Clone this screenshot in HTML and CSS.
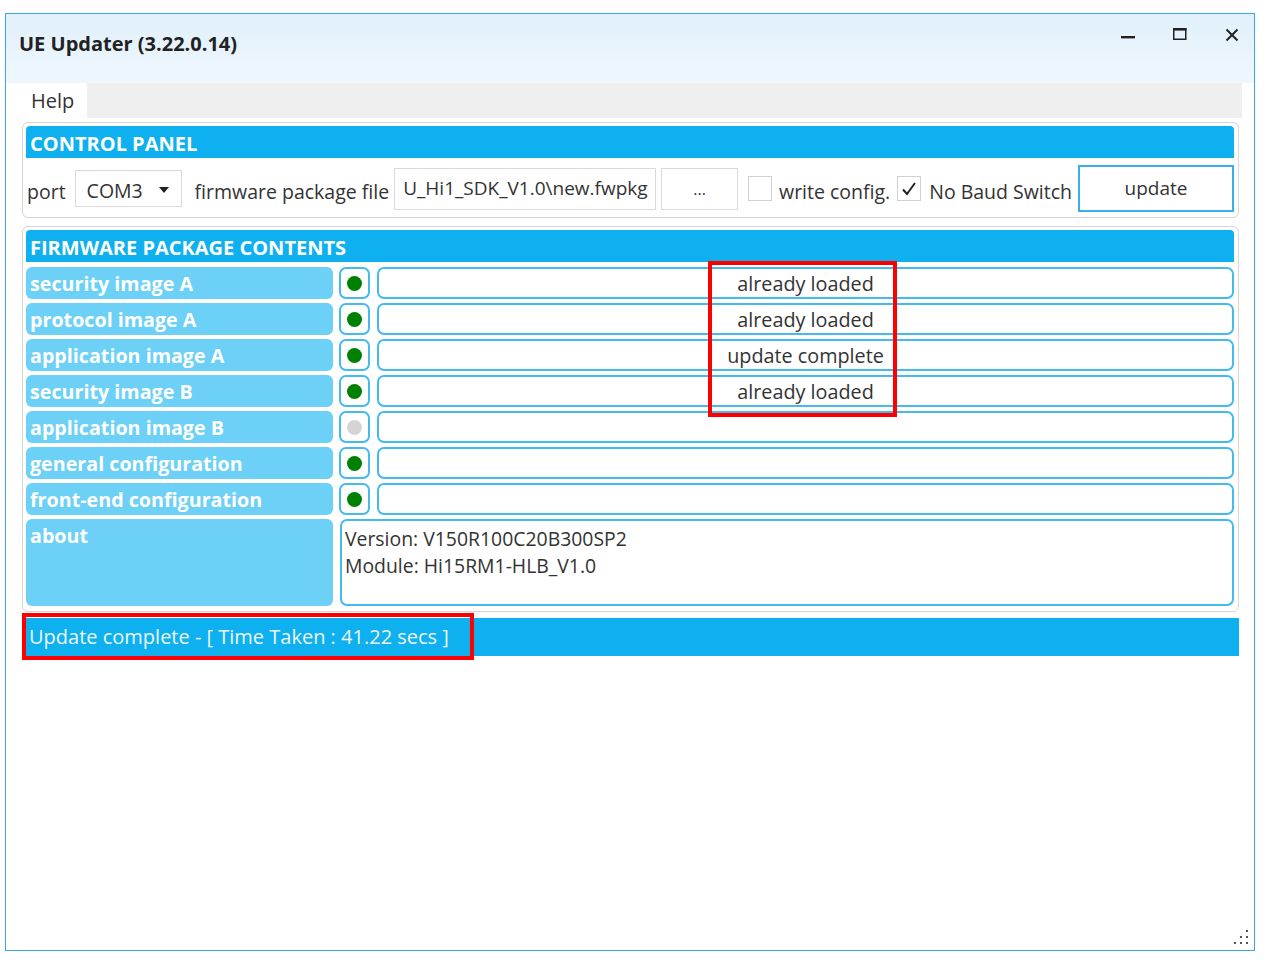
FILE: index.html
```html
<!DOCTYPE html>
<html>
<head>
<meta charset="utf-8">
<link rel="stylesheet" href="styles.css">
</head>
<body>
<div class="window">
  <div class="titlebar">
    <div class="title">UE Updater (3.22.0.14)</div>
    <div class="wctrls">
      <svg class="wc" width="16" height="16" viewBox="0 0 16 16"><rect x="1" y="9" width="14" height="2.4" fill="#222"/></svg>
      <svg class="wc" width="16" height="16" viewBox="0 0 16 16"><rect x="1.75" y="1.75" width="12" height="10.5" fill="none" stroke="#222" stroke-width="1.5"/><rect x="1" y="1" width="13.5" height="2.6" fill="#222"/></svg>
      <svg class="wc" width="16" height="16" viewBox="0 0 16 16"><path d="M2.5 2.5 L13.5 13.5 M13.5 2.5 L2.5 13.5" stroke="#222" stroke-width="2" fill="none"/></svg>
    </div>
  </div>
  <div class="menubar"><span class="menuitem">Help</span></div>

  <div class="content">
    <div class="panel cp">
      <div class="phead">CONTROL PANEL</div>
      <div class="cprow">
        <span class="lbl l-port">port</span>
        <div class="combo"><span>COM3</span><svg width="10" height="6" viewBox="0 0 10 6"><path d="M0 0 H10 L5 6 Z" fill="#222"/></svg></div>
        <span class="lbl l-fw">firmware package file</span>
        <div class="tinput">U_Hi1_SDK_V1.0\new.fwpkg</div>
        <div class="browse">...</div>
        <div class="chk c1"></div>
        <span class="lbl l-wc">write config.</span>
        <div class="chk c2"><svg width="20" height="20" viewBox="0 0 20 20"><path d="M4 10.5 L8 15 L16 4" stroke="#222" stroke-width="2" fill="none"/></svg></div>
        <span class="lbl l-nb">No Baud Switch</span>
        <div class="upd">update</div>
      </div>
    </div>

    <div class="panel fpc">
      <div class="phead">FIRMWARE PACKAGE CONTENTS</div>
      <div class="rows">
        <div class="row"><div class="name">security image A</div><div class="dotbox"><span class="dot on"></span></div><div class="status">already loaded</div></div>
        <div class="row"><div class="name">protocol image A</div><div class="dotbox"><span class="dot on"></span></div><div class="status">already loaded</div></div>
        <div class="row"><div class="name">application image A</div><div class="dotbox"><span class="dot on"></span></div><div class="status">update complete</div></div>
        <div class="row"><div class="name">security image B</div><div class="dotbox"><span class="dot on"></span></div><div class="status">already loaded</div></div>
        <div class="row"><div class="name">application image B</div><div class="dotbox"><span class="dot off"></span></div><div class="status"></div></div>
        <div class="row"><div class="name">general configuration</div><div class="dotbox"><span class="dot on"></span></div><div class="status"></div></div>
        <div class="row"><div class="name">front-end configuration</div><div class="dotbox"><span class="dot on"></span></div><div class="status"></div></div>
        <div class="row about"><div class="name">about</div><div class="aboutbox">Version: V150R100C20B300SP2<br>Module: Hi15RM1-HLB_V1.0</div></div>
      </div>
      <div class="redbox rb1"></div>
    </div>

    <div class="statusbar">Update complete - [ Time Taken : 41.22 secs ]<div class="redbox rb2"></div></div>
  </div>

  <svg class="grip" width="16" height="16" viewBox="0 0 16 16">
    <rect x="12" y="0" width="2" height="2" fill="#555"/>
    <rect x="6" y="6" width="2" height="2" fill="#555"/>
    <rect x="12" y="6" width="2" height="2" fill="#555"/>
    <rect x="0" y="12" width="2" height="2" fill="#555"/>
    <rect x="6" y="12" width="2" height="2" fill="#555"/>
    <rect x="12" y="12" width="2" height="2" fill="#555"/>
  </svg>
</div>
</body>
</html>
```

FILE: styles.css
```css
* { box-sizing: border-box; }
html, body { margin: 0; padding: 0; background: #fff; }
body {
  font-family: "Open Sans", "Noto Sans", "DejaVu Sans", sans-serif;
  font-size: 19.5px;
  color: #333;
}
.window {
  position: relative;
  margin: 13px 0 0 5px;
  width: 1250px;
  height: 938px;
  border: 1px solid #3aa6e6;
  background: #fff;
  display: flex;
  flex-direction: column;
}
.titlebar {
  height: 69px;
  background: linear-gradient(#e1f0fb, #eef7fd);
  display: flex;
  align-items: flex-start;
  justify-content: space-between;
}
.title {
  margin: 16px 0 0 13px;
  font-weight: 700;
  font-size: 20px;
  color: #222;
}
.wctrls {
  display: flex;
  gap: 36px;
  margin: 13px 14px 0 0;
}
.menubar {
  height: 35px;
  margin: 0 12px 0 13px;
  background: #efefef;
  display: flex;
}
.menuitem {
  background: #fff;
  width: 68px;
  padding: 4px 0 0 12px;
  font-size: 20px;
  color: #333;
}
.content {
  padding: 4px 15px 0 16px;
  display: flex;
  flex-direction: column;
}
.panel {
  position: relative;
  border: 1px solid #d6d6d6;
  border-radius: 6px;
  padding: 3px 4px 3px 3px;
}
.phead {
  height: 32px;
  background: #0fb0ef;
  color: #fff;
  font-weight: 700;
  font-size: 20px;
  line-height: 27px;
  padding: 4px 0 0 4px;
  border-radius: 4px 4px 0 0;
}
.cp { height: 96px; padding-bottom: 1px; }
.cprow {
  display: flex;
  align-items: center;
  height: 58px;
  padding-top: 3px;
}
.lbl { white-space: nowrap; font-size: 19.5px; color: #333; padding-top: 5px; }
.l-port { margin-left: 1px; }
.combo {
  margin-left: 9px;
  width: 107px;
  height: 37px;
  border: 1px solid #d9d9d9;
  display: flex;
  align-items: center;
  justify-content: space-between;
  padding: 3px 12px 0 11px;
  font-size: 19.5px;
}
.l-fw { margin-left: 13px; }
.tinput {
  margin-left: 5px;
  width: 262px;
  height: 42px;
  border: 1px solid #d9d9d9;
  padding: 6px 0 0 8px;
  font-size: 19px;
  white-space: nowrap;
  overflow: hidden;
}
.browse {
  margin-left: 5px;
  width: 77px;
  height: 42px;
  border: 1px solid #d9d9d9;
  text-align: center;
  padding-top: 9px;
  font-size: 16px;
}
.chk {
  width: 24px;
  height: 25px;
  border: 1px solid #d0d0d0;
  display: flex;
  align-items: center;
  justify-content: center;
}
.c1 { margin-left: 10px; }
.l-wc { margin-left: 7px; }
.c2 { margin-left: 7px; }
.l-nb { margin-left: 8px; }
.upd {
  margin-left: 6px;
  width: 156px;
  height: 47px;
  border: 2px solid #39aee8;
  text-align: center;
  padding-top: 8px;
  font-size: 19px;
}
.fpc { margin-top: 8px; height: 386px; }
.rows {
  display: flex;
  flex-direction: column;
  gap: 4px;
  margin-top: 5px;
}
.row { display: flex; height: 32px; }
.name {
  width: 307px;
  background: #6dd0f6;
  border-radius: 6px;
  color: #fff;
  font-weight: 700;
  font-size: 19.7px;
  line-height: 27px;
  padding: 3px 0 0 4px;
  white-space: nowrap;
}
.dotbox {
  margin-left: 6px;
  width: 31px;
  border: 2px solid #45baef;
  border-radius: 7px;
  display: flex;
  align-items: center;
  justify-content: center;
}
.dot { width: 15px; height: 15px; border-radius: 50%; }
.dot.on { background: #008000; }
.dot.off { background: #d4d4d4; }
.status {
  margin-left: 7px;
  flex: 1;
  border: 2px solid #45baef;
  border-radius: 7px;
  text-align: center;
  line-height: 27px;
  padding-top: 1px;
  font-size: 19.8px;
  color: #333;
}
.row.about { height: 87px; }
.aboutbox {
  margin-left: 7px;
  flex: 1;
  border: 2px solid #45baef;
  border-radius: 7px;
  padding: 4px 0 0 3px;
  line-height: 27px;
  font-size: 19.4px;
  color: #333;
}
.statusbar {
  position: relative;
  margin-top: 6px;
  height: 38px;
  background: #0fb0ef;
  color: #eaf7fe;
  font-size: 20px;
  line-height: 27px;
  padding: 5px 0 0 7px;
}
.redbox { position: absolute; border: 4px solid #ff0000; }
.rb1 { left: 685px; top: 34px; width: 189px; height: 156px; }
.rb2 { left: 0px; top: -5px; width: 452px; height: 47px; }
.grip { position: absolute; right: 4px; bottom: 4px; }
```
